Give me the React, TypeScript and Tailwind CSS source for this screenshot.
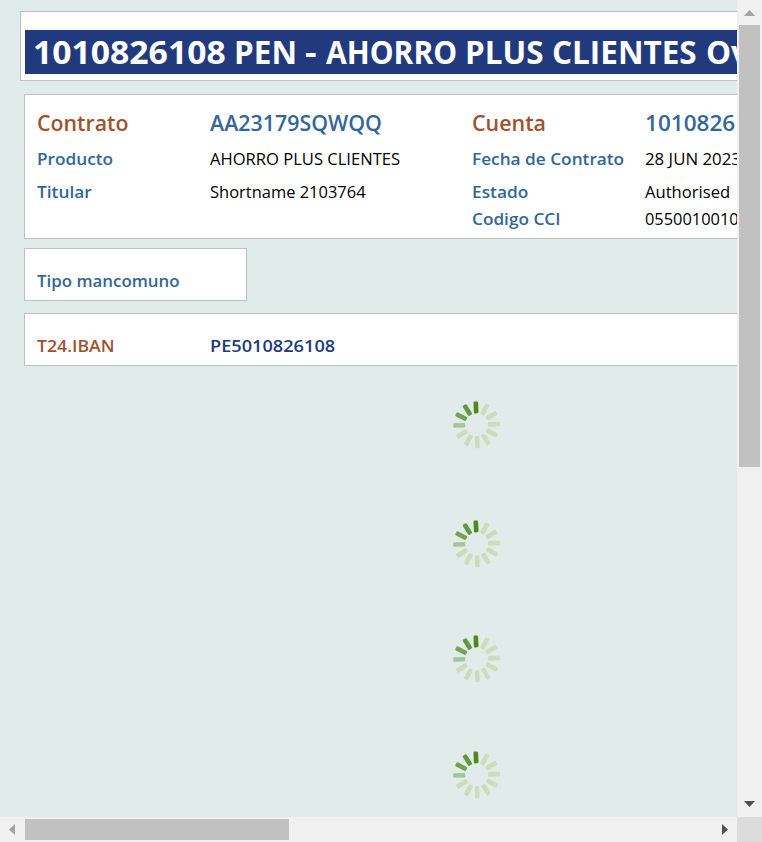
import { useLayoutEffect, useRef, useState } from "react";
import type { ReactNode } from "react";

/** Single line of text condensed or stretched to a given advance width. */
function Fit({ w, className = "", children }: { w: number; className?: string; children: ReactNode }) {
  const ref = useRef<HTMLSpanElement>(null);
  const [scale, setScale] = useState(1);
  useLayoutEffect(() => {
    if (ref.current) setScale(w / ref.current.offsetWidth);
  }, [w]);
  return (
    <span className={`block shrink-0 ${className}`} style={{ width: w }}>
      <span
        ref={ref}
        className="inline-block origin-left whitespace-nowrap"
        style={{ transform: `scaleX(${scale})` }}
      >
        {children}
      </span>
    </span>
  );
}

const big = "text-[22px] font-semibold";
const label = "text-[17px] font-semibold text-[#336699]";
const value = "text-[17px] text-black";

function Row({ className, children }: { className: string; children: ReactNode }) {
  return (
    <div className={`grid grid-cols-[173px_262px_173px_262px] items-center pl-[11.5px] ${className}`}>
      {children}
    </div>
  );
}

const opacities = [1, 0.18, 0.18, 0.18, 0.18, 0.18, 0.18, 0.18, 0.18, 0.4, 0.75, 0.85];

function Spinner({ className }: { className: string }) {
  return (
    <svg viewBox="-23.6 -23.8 48 48" className={`ml-[453px] block h-12 w-12 shrink-0 ${className}`}>
      {opacities.map((o, i) => (
        <rect
          key={i}
          x="-2.3"
          y="-23.4"
          width="4.6"
          height="12"
          rx="1.3"
          fill={o === 0.18 ? "#94b840" : "#4f8a1e"}
          opacity={o === 0.18 ? 0.27 : o}
          transform={`rotate(${i * 30 - 2})`}
        />
      ))}
    </svg>
  );
}

export default function App() {
  return (
    <div className="grid h-[842px] w-[762px] grid-cols-[737px_25px] grid-rows-[817px_25px] overflow-hidden bg-[#f0f0f0] font-['Open_Sans','Noto_Sans',sans-serif]">
      <main className="flex flex-col overflow-hidden bg-[#e1ebe9]">
        <header className="mt-[11px] ml-5 h-[70px] w-[1200px] shrink-0 border border-[#c0c0c0] bg-white pt-[18px] pl-1">
          <h1 className="flex h-11 items-center bg-[#21397d] pl-[8px] text-[33px] leading-[44px] font-bold text-white">
            <Fit w={193}>1010826108</Fit>
            <Fit w={63} className="ml-[8px]">PEN</Fit>
            <Fit w={12} className="ml-[8px]">-</Fit>
            <Fit w={131} className="ml-[9px]">AHORRO</Fit>
            <Fit w={78} className="ml-[8px]">PLUS</Fit>
            <Fit w={145} className="ml-[9px]">CLIENTES</Fit>
            <Fit w={149} className="ml-[9px]">Overview</Fit>
          </h1>
        </header>

        <section className="mt-[13px] ml-6 h-[145px] w-[1200px] shrink-0 border border-[#c0c0c0] bg-white pt-[8px]">
          <Row className="h-[38px]">
            <Fit w={91} className={`text-[#a0522d] ${big}`}>Contrato</Fit>
            <Fit w={172} className={`text-[#336699] ${big}`}>AA23179SQWQQ</Fit>
            <Fit w={74} className={`text-[#a0522d] ${big}`}>Cuenta</Fit>
            <Fit w={129} className={`text-[#336699] ${big}`}>1010826108</Fit>
          </Row>
          <Row className="mt-px h-[33px]">
            <Fit w={76} className={label}>Producto</Fit>
            <Fit w={190} className={value}>AHORRO PLUS CLIENTES</Fit>
            <Fit w={152} className={label}>Fecha de Contrato</Fit>
            <Fit w={96} className={value}>28 JUN 2023</Fit>
          </Row>
          <Row className="h-[33px]">
            <Fit w={55} className={label}>Titular</Fit>
            <Fit w={156} className={value}>Shortname 2103764</Fit>
            <Fit w={56} className={label}>Estado</Fit>
            <Fit w={85} className={value}>Authorised</Fit>
          </Row>
          <Row className="-mt-[2px] h-[25px]">
            <span />
            <span />
            <Fit w={88} className={label}>Codigo CCI</Fit>
            <Fit w={187} className={value}>05500100101082610850</Fit>
          </Row>
        </section>

        <section className="mt-[9px] ml-6 h-[53px] w-[223px] shrink-0 border border-[#c0c0c0] bg-white pt-[15px]">
          <div className="flex h-[33px] items-center pl-[12px]">
            <Fit w={143} className={label}>Tipo mancomuno</Fit>
          </div>
        </section>

        <section className="mt-3 ml-6 h-[53px] w-[1200px] shrink-0 border border-[#c0c0c0] bg-white pt-[15px]">
          <Row className="h-[33px]">
            <Fit w={78} className="text-[17px] font-semibold text-[#a0522d]">T24.IBAN</Fit>
            <Fit w={125} className="text-[17px] font-semibold text-[#21397d]">PE5010826108</Fit>
          </Row>
        </section>

        <Spinner className="mt-[35px]" />
        <Spinner className="mt-[71px]" />
        <Spinner className="mt-[67px]" />
        <Spinner className="mt-[68px]" />
      </main>

      <div className="flex flex-col items-center text-[#505050]">
        <svg className="mt-[10px] block h-[6px] w-[11px] shrink-0 text-[#a3a3a3]" viewBox="0 0 11 6">
          <path d="M5.5 0 11 6H0Z" fill="currentColor" />
        </svg>
        <div className="mt-[9px] mr-px h-[442px] w-[21px] shrink-0 bg-[#c1c1c1]" />
        <svg className="mt-[334px] block h-[6px] w-[11px] shrink-0" viewBox="0 0 11 6">
          <path d="M0 0h11L5.5 6Z" fill="currentColor" />
        </svg>
      </div>

      <div className="flex items-center text-[#505050]">
        <svg className="ml-[9px] block h-[11px] w-[6px] shrink-0 text-[#a3a3a3]" viewBox="0 0 6 11">
          <path d="M6 0v11L0 5.5Z" fill="currentColor" />
        </svg>
        <div className="mb-px ml-[10px] h-[21px] w-[264px] shrink-0 bg-[#c1c1c1]" />
        <svg className="ml-[433px] block h-[11px] w-[6px] shrink-0" viewBox="0 0 6 11">
          <path d="M0 0v11l6-5.5Z" fill="currentColor" />
        </svg>
      </div>
      <div className="bg-[#dcdcdc]" />
    </div>
  );
}
